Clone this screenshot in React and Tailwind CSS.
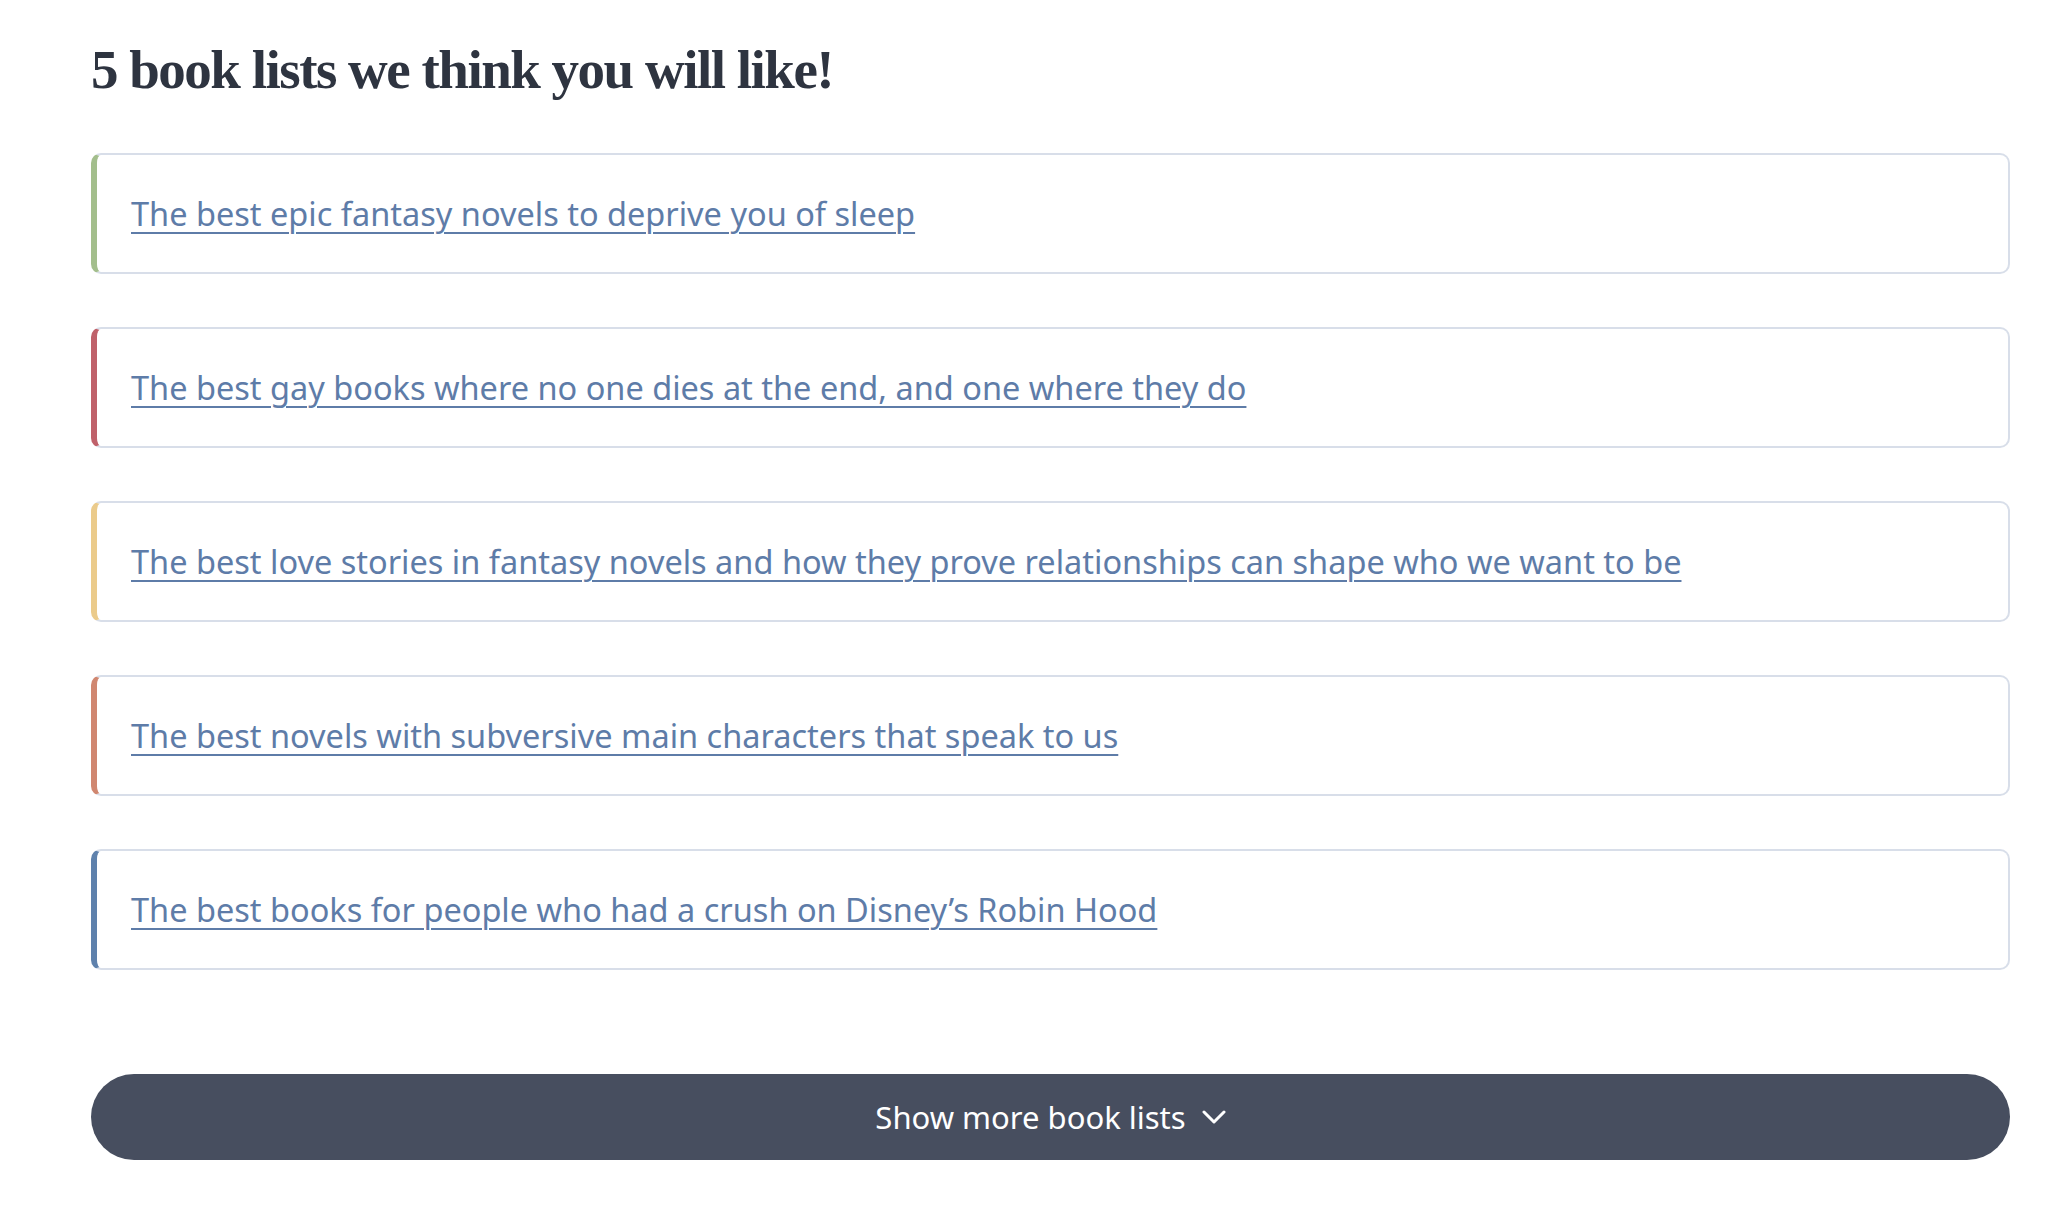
import React from 'react';

const lists = [
  { title: 'The best epic fantasy novels to deprive you of sleep', accent: 'border-l-[#a3be8c]' },
  { title: 'The best gay books where no one dies at the end, and one where they do', accent: 'border-l-[#bf616a]' },
  { title: 'The best love stories in fantasy novels and how they prove relationships can shape who we want to be', accent: 'border-l-[#ebcb8b]' },
  { title: 'The best novels with subversive main characters that speak to us', accent: 'border-l-[#d08770]' },
  { title: 'The best books for people who had a crush on Disney\u2019s Robin Hood', accent: 'border-l-[#5e81ac]' },
];

const App = () => {
  return (
    <div className="min-h-screen bg-white pl-[91px] pr-[40px] pt-[40px]">
      {/* Heading */}
      <h2 className="font-['Liberation_Serif',serif] text-[55px] font-bold leading-[60px] tracking-[-1.5px] text-[#2e3440]">
        5 book lists we think you will like!
      </h2>

      {/* Book lists */}
      <div className="mt-[53px] flex flex-col gap-[53px]">
        {lists.map((list, index) => (
          <div
            key={index}
            className={`flex h-[121px] items-center rounded-[10px] border-2 border-l-[6px] border-[#d8dee9] bg-white pl-[34px] pt-[2px] ${list.accent}`}
          >
            <a
              href="#"
              className="font-['Noto_Sans',sans-serif] text-[32.5px] text-[#5e7ca8] underline decoration-2 underline-offset-[6px]"
            >
              {list.title}
            </a>
          </div>
        ))}
      </div>

      {/* Show more */}
      <button className="mt-[104px] flex h-[86px] w-full items-center justify-center gap-[16px] rounded-full bg-[#474e5f] font-['Noto_Sans',sans-serif] text-[31px] text-white">
        Show more book lists
        <svg className="h-[14px] w-[24px]" viewBox="0 0 24 14" fill="none" stroke="currentColor" strokeWidth="3" strokeLinecap="round" strokeLinejoin="round">
          <path d="M2 2l10 10L22 2" />
        </svg>
      </button>
    </div>
  );
};

export default App;
